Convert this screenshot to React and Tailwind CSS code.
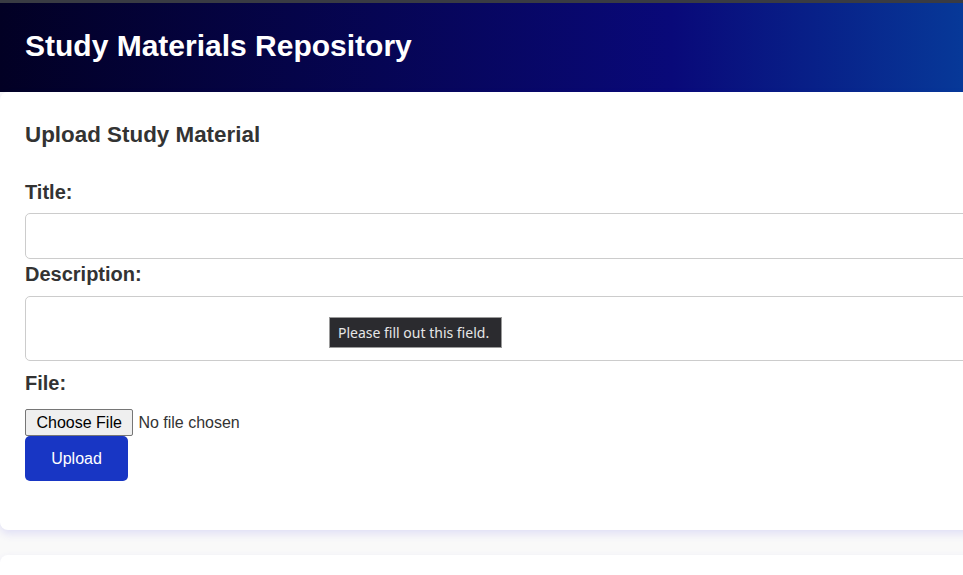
import { useState } from 'react';

export default function App() {
  const [title, setTitle] = useState('');
  const [description, setDescription] = useState('');

  return (
    <div className="w-full h-screen overflow-hidden bg-[#f9f9f9] font-['Liberation_Sans',Arial,sans-serif] text-[#333]">
      <div className="w-[1920px]">
        {/* Header */}
        <header className="h-[92px] border-t-[3px] border-[#393b43] bg-[linear-gradient(90deg,#020024_0%,#090979_35%,#00d4ff_100%)] pl-[25px] pt-[26px]">
          <h1 className="text-[30px] leading-[34px] font-bold text-white">Study Materials Repository</h1>
        </header>

        {/* Upload card */}
        <section className="relative bg-white rounded-lg shadow-[0_4px_8px_rgba(79,70,229,0.14)] px-[25px] pt-[30px] pb-[49px]">
          <h2 className="text-[22.4px] leading-[26px] font-bold mb-[33px]">Upload Study Material</h2>

          <form onSubmit={(e) => e.preventDefault()}>
            <label htmlFor="title" className="block text-[20px] leading-[23px] font-bold mb-[9px]">Title:</label>
            <input
              id="title"
              type="text"
              required
              value={title}
              onChange={(e) => setTitle(e.target.value)}
              className="block w-full h-[46px] border border-[#ccc] rounded-[5px] px-[10px] text-base mb-[4px] outline-none"
            />

            <label htmlFor="description" className="block text-[20px] leading-[23px] font-bold mb-[10px]">Description:</label>
            <textarea
              id="description"
              required
              value={description}
              onChange={(e) => setDescription(e.target.value)}
              className="block w-full h-[65px] border border-[#ccc] rounded-[5px] px-[10px] py-[8px] text-base mb-[11px] resize-none outline-none"
            />

            <label htmlFor="file" className="block text-[20px] leading-[23px] font-bold mb-[14px]">File:</label>
            <input
              id="file"
              type="file"
              className="block text-base leading-[19px] text-[#333] file:h-[27px] file:px-[10.5px] file:mr-[5px] file:bg-[#efefef] file:border file:border-solid file:border-[#767676] file:rounded-[2px] file:text-black"
            />

            <button
              type="submit"
              className="block w-[103px] h-[45px] bg-[#1836c4] text-white text-base rounded-[5px]"
            >
              Upload
            </button>
          </form>

          {/* Validation bubble */}
          <div className="absolute left-[329px] top-[225px] w-[173px] h-[31px] bg-[#2b2b2f] border border-[#9a9a9a] flex items-center pl-[8px] text-[14px] text-[#e6e6e6] font-['Noto_Sans',sans-serif]">
            Please fill out this field.
          </div>
        </section>

        {/* Materials list card */}
        <section className="mt-[25px] bg-white rounded-lg h-[100px] shadow-[0_4px_8px_rgba(79,70,229,0.14)]" />
      </div>
    </div>
  );
}
